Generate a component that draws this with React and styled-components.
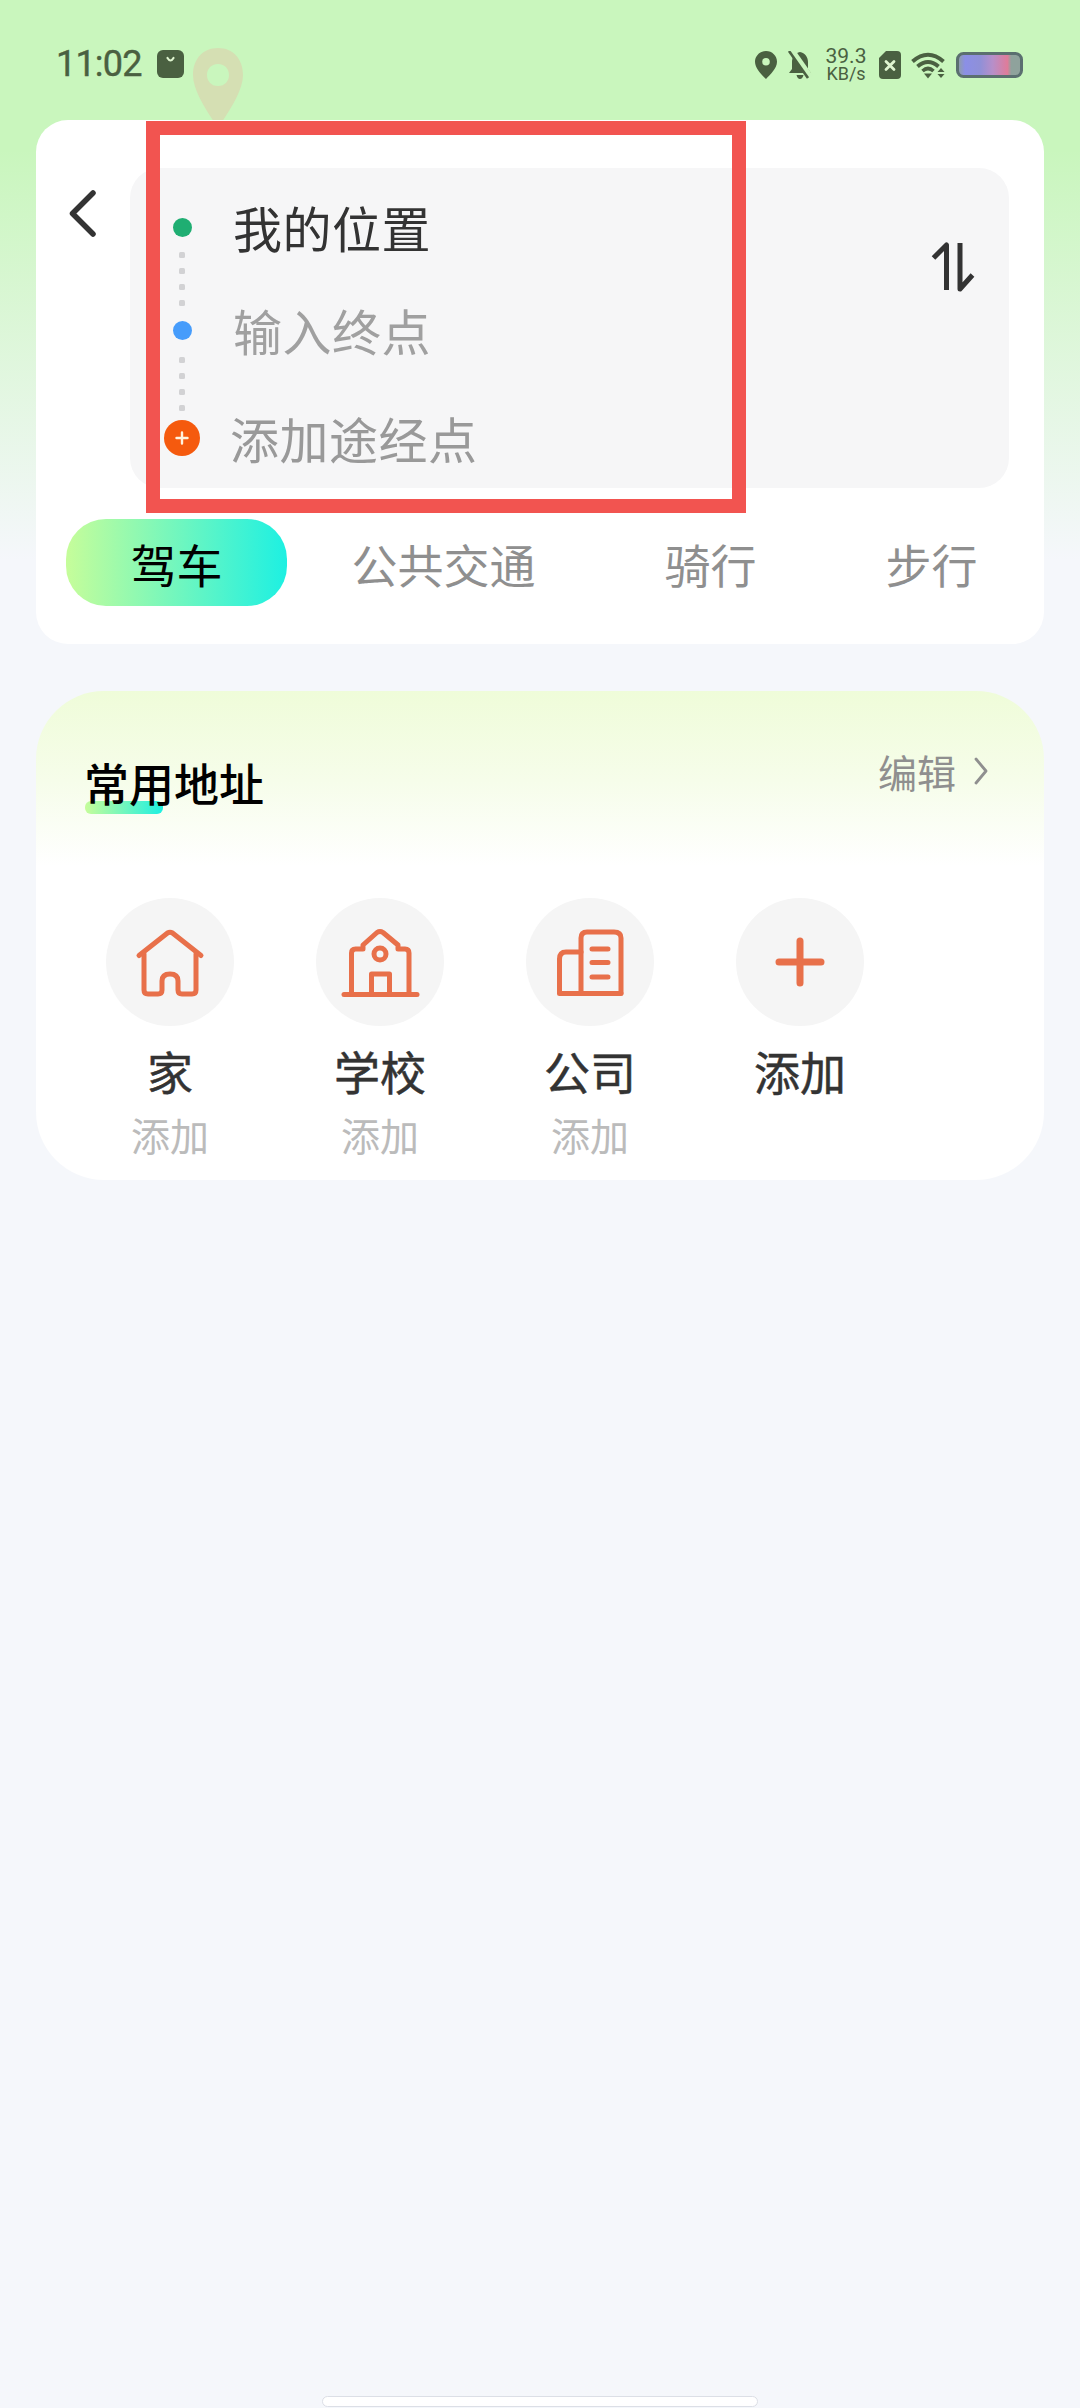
import React from 'react';
import styled, { createGlobalStyle } from 'styled-components';

const GlobalStyle = createGlobalStyle`
  html, body {
    margin: 0;
    padding: 0;
    background: #f5f7fb;
  }
  * {
    box-sizing: border-box;
  }
`;

const TABS = ['驾车', '公共交通', '骑行', '步行'];

const PLACES = [
  { name: '家', sub: '添加', icon: 'home' },
  { name: '学校', sub: '添加', icon: 'school' },
  { name: '公司', sub: '添加', icon: 'office' },
  { name: '添加', icon: 'plus' },
];

function PlaceIcon({ type }) {
  if (type === 'home') {
    return (
      <PlaceSvg viewBox="0 0 80 80">
        <path d="M9 33.5 L37.5 11 Q40 9.5 42.5 11 L71 33.5" />
        <path d="M14 32 V68 Q14 72 18 72 H28 Q32 72 32 68 V59 Q32 52 40 52 Q48 52 48 59 V68 Q48 72 52 72 H62 Q66 72 66 68 V32" />
      </PlaceSvg>
    );
  }
  if (type === 'school') {
    return (
      <PlaceSvg viewBox="0 0 80 80">
        <path d="M4 72.5 H77" />
        <path d="M11.5 72 V31 Q11.5 27 15.5 27 H23 V23 L37 10.5 Q40 8.5 43 10.5 L58 23 V27 H65 Q69 27 69 31 V72" />
        <circle cx="40" cy="32" r="6" />
        <path d="M31.5 72 V52 H49.5 V72" />
      </PlaceSvg>
    );
  }
  if (type === 'office') {
    return (
      <PlaceSvg viewBox="0 0 80 80">
        <path d="M31 71 V16 Q31 10 37 10 H64 Q71 10 71 16 V71" />
        <path d="M31 30 H16 Q9.5 30 9.5 37 V71.5 H71" />
        <path d="M42 27 H58 M42 40.5 H58 M42 55 H58" />
      </PlaceSvg>
    );
  }
  return (
    <PlaceSvg viewBox="0 0 80 80" $weight={7}>
      <path d="M19 40 H61 M40 19 V61" />
    </PlaceSvg>
  );
}

function StatusIcons() {
  return (
    <StatusRight>
      <svg width="22" height="28" viewBox="0 0 22 28">
        <path
          fill="#4a6041"
          fillRule="evenodd"
          d="M11 0 C4.8 0 0 4.8 0 10.8 C0 17.5 7 24 11 28 C15 24 22 17.5 22 10.8 C22 4.8 17.2 0 11 0 Z M11 7 A3.8 3.8 0 1 1 11 14.6 A3.8 3.8 0 1 1 11 7 Z"
        />
      </svg>
      <svg width="26" height="28" viewBox="0 0 26 28">
        <path fill="#4a6041" d="M13 1 C8 2 5 6 5 11 V18 L2 22 H24 L21 18 V11 C21 6 18 2 13 1 Z M9.5 24 H16.5 Q15.5 28 13 28 Q10.5 28 9.5 24 Z" />
        <path d="M5 -1 L24 26" stroke="#c9f5bd" strokeWidth="5" />
        <path d="M2 0 L21 27" stroke="#4a6041" strokeWidth="2.6" />
      </svg>
      <SpeedBox>
        <SpeedValue>39.3</SpeedValue>
        <SpeedUnit>KB/s</SpeedUnit>
      </SpeedBox>
      <svg width="22" height="28" viewBox="0 0 22 28">
        <path fill="#4a6041" d="M7 0 H18 Q22 0 22 4 V24 Q22 28 18 28 H4 Q0 28 0 24 V7 Z" />
        <path d="M7 10.5 L15 18.5 M15 10.5 L7 18.5" stroke="#dff5d0" strokeWidth="2.8" strokeLinecap="round" />
      </svg>
      <svg width="35" height="27" viewBox="0 0 35 27" fill="none" stroke="#4a6041">
        <path d="M1.5 9.5 Q17 -4 32.5 9.5" strokeWidth="4" />
        <path d="M6.5 14.5 Q17 5.5 27.5 14.5" strokeWidth="4" />
        <path d="M11.5 19 Q17 14 22.5 19" strokeWidth="3.6" />
        <path d="M13 21.5 H21 L17 26.5 Z" fill="#4a6041" stroke="none" />
        <path d="M30 16 L33.5 20 H26.5 Z M26.5 22 H33.5 L30 26 Z" fill="#4a6041" stroke="none" />
      </svg>
      <svg width="67" height="26" viewBox="0 0 67 26">
        <defs>
          <linearGradient id="batteryFill" x1="0" x2="1" y1="0" y2="0">
            <stop offset="0" stopColor="#8f9f9f" />
            <stop offset="0.12" stopColor="#8b8fe6" />
            <stop offset="0.35" stopColor="#8f90d8" />
            <stop offset="0.55" stopColor="#b78fc9" />
            <stop offset="0.78" stopColor="#df7c9a" />
            <stop offset="0.84" stopColor="#8fa29c" />
            <stop offset="1" stopColor="#8fa29c" />
          </linearGradient>
        </defs>
        <rect x="1.5" y="1.5" width="64" height="23" rx="6" fill="url(#batteryFill)" stroke="#5b6f70" strokeWidth="3" />
      </svg>
    </StatusRight>
  );
}

export default function App() {
  return (
    <Page>
      <GlobalStyle />

      <StatusBar>
        <StatusLeft>
          <Time>11:02</Time>
          <svg width="27" height="28" viewBox="0 0 27 28">
            <rect width="27" height="28" rx="6" fill="#4a6041" />
            <path d="M10.5 8 Q13.5 13 16.5 8" fill="none" stroke="#dff5d0" strokeWidth="2.2" strokeLinecap="round" />
          </svg>
        </StatusLeft>
        <StatusIcons />
        <WatermarkPin width="50" height="80" viewBox="0 0 50 80">
          <path
            fill="#d5dfb3"
            fillRule="evenodd"
            d="M25 0 C10 0 0 11 0 27 C0 44 16 66 25 80 C34 66 50 44 50 27 C50 11 40 0 25 0 Z M25 16 C32 16 36 21 36 27 C36 33 32 38 25 38 C18 38 14 33 14 27 C14 21 18 16 25 16 Z"
          />
        </WatermarkPin>
      </StatusBar>

      <RouteCard>
        <RouteTop>
          <BackButton width="27" height="47" viewBox="0 0 27 47">
            <path d="M24 3 L3.5 23.5 L24 44" />
          </BackButton>
          <RouteBox>
            <RouteList>
              <RouteRow>
                <MarkerSlot><Dot $color="#1fae72" /></MarkerSlot>
                <RouteLabel $active>我的位置</RouteLabel>
              </RouteRow>
              <Connector $height={55}>
                <i /><i /><i /><i />
              </Connector>
              <RouteRow>
                <MarkerSlot><Dot $color="#469cfb" /></MarkerSlot>
                <RouteLabel>输入终点</RouteLabel>
              </RouteRow>
              <Connector $height={60}>
                <i /><i /><i /><i />
              </Connector>
              <RouteRow>
                <MarkerSlot>
                  <AddMarker>
                    <svg width="16" height="16" viewBox="0 0 16 16">
                      <path d="M2.5 8 H13.5 M8 2.5 V13.5" stroke="#fff3e0" strokeWidth="2.4" strokeLinecap="round" />
                    </svg>
                  </AddMarker>
                </MarkerSlot>
                <WaypointLabel>添加途经点</WaypointLabel>
              </RouteRow>
            </RouteList>
            <SwapIcon width="44" height="50" viewBox="0 0 44 50">
              <path d="M2.5 16 L15.5 3 V48" />
              <path d="M29 1 V47 L41.5 33" />
            </SwapIcon>
          </RouteBox>
        </RouteTop>

        <TabRow>
          {TABS.map((tab, index) => (
            <Tab key={tab} $active={index === 0}>{tab}</Tab>
          ))}
        </TabRow>
      </RouteCard>

      <PlacesCard>
        <PlacesHeader>
          <PlacesTitle>
            <TitleMark />
            <TitleText>常用地址</TitleText>
          </PlacesTitle>
          <EditLink>
            编辑
            <svg width="14" height="30" viewBox="0 0 14 30">
              <path d="M2 3 L12 15 L2 27" fill="none" stroke="#8f8f8f" strokeWidth="2.8" strokeLinecap="round" strokeLinejoin="round" />
            </svg>
          </EditLink>
        </PlacesHeader>

        <PlacesRow>
          {PLACES.map((place) => (
            <Place key={place.icon}>
              <PlaceCircle><PlaceIcon type={place.icon} /></PlaceCircle>
              <PlaceName>{place.name}</PlaceName>
              {place.sub && <PlaceSub>{place.sub}</PlaceSub>}
            </Place>
          ))}
        </PlacesRow>
      </PlacesCard>

      <HomeIndicator />
      <RedFrame />
    </Page>
  );
}

const Page = styled.div`
  position: relative;
  width: 1080px;
  height: 2408px;
  display: flex;
  flex-direction: column;
  overflow: hidden;
  background: linear-gradient(180deg, #c9f6bd 0, #c9f6bd 150px, #f5f7fb 560px);
  font-family: "Noto Sans CJK SC", "Noto Sans", sans-serif;
`;

const StatusBar = styled.div`
  position: relative;
  height: 120px;
  flex: none;
  display: flex;
  justify-content: space-between;
  align-items: flex-start;
  padding: 47px 57px 0 56px;
  overflow: hidden;
`;

const StatusLeft = styled.div`
  display: flex;
  align-items: center;
  gap: 15px;
  padding-top: 3px;
`;

const Time = styled.span`
  font-family: Roboto, sans-serif;
  font-size: 36px;
  line-height: 28px;
  font-weight: 400;
  letter-spacing: -0.8px;
  color: #4a6041;
  -webkit-text-stroke: 0.4px #4a6041;
`;

const StatusRight = styled.div`
  display: flex;
  align-items: center;
  gap: 10px;
  height: 36px;
`;

const SpeedBox = styled.div`
  width: 46px;
  display: flex;
  flex-direction: column;
  align-items: center;
  font-family: Roboto, sans-serif;
  color: #4a6041;
`;

const SpeedValue = styled.span`
  font-size: 21px;
  line-height: 18px;
`;

const SpeedUnit = styled.span`
  font-size: 18px;
  line-height: 18px;
`;

const WatermarkPin = styled.svg`
  position: absolute;
  left: 193px;
  top: 48px;
`;

const RouteCard = styled.section`
  flex: none;
  height: 524px;
  margin: 0 36px;
  padding: 48px 35px 0 33px;
  background: #fff;
  border-radius: 32px;
`;

const RouteTop = styled.div`
  display: flex;
  align-items: flex-start;
  gap: 34px;
`;

const BackButton = styled.svg`
  flex: none;
  margin-top: 22px;
  fill: none;
  stroke: #333;
  stroke-width: 5.5;
  stroke-linecap: round;
  stroke-linejoin: round;
`;

const RouteBox = styled.div`
  flex: 1;
  height: 320px;
  display: flex;
  justify-content: space-between;
  align-items: flex-start;
  padding: 35px 34px 0 34px;
  background: #f6f6f7;
  border-radius: 30px;
`;

const RouteList = styled.div`
  display: flex;
  flex-direction: column;
`;

const RouteRow = styled.div`
  display: flex;
  align-items: center;
  height: 48px;
`;

const MarkerSlot = styled.div`
  width: 36px;
  flex: none;
  display: flex;
  justify-content: center;
`;

const Dot = styled.span`
  width: 19px;
  height: 19px;
  border-radius: 50%;
  background: ${(p) => p.$color};
`;

const AddMarker = styled.span`
  width: 36px;
  height: 36px;
  border-radius: 50%;
  background: #f55a0e;
  display: flex;
  align-items: center;
  justify-content: center;
`;

const Connector = styled.div`
  width: 36px;
  height: ${(p) => p.$height}px;
  display: flex;
  flex-direction: column;
  align-items: center;
  justify-content: center;
  gap: 10px;

  i {
    width: 6px;
    height: 6px;
    border-radius: 1.5px;
    background: #d2d2d4;
  }
`;

const RouteLabel = styled.span`
  margin-left: 33px;
  font-size: 49px;
  line-height: 48px;
  letter-spacing: 0.5px;
  color: ${(p) => (p.$active ? '#333' : '#a0a0a0')};
`;

const WaypointLabel = styled(RouteLabel)`
  margin-left: 30px;
  color: #999;
`;

const SwapIcon = styled.svg`
  flex: none;
  margin-top: 39px;
  fill: none;
  stroke: #333;
  stroke-width: 5;
  stroke-linejoin: round;
`;

const TabRow = styled.div`
  display: flex;
  margin: 31px 0 0 -3px;
`;

const Tab = styled.div`
  height: 87px;
  padding: 0 64.5px;
  display: flex;
  align-items: center;
  font-size: 46px;
  white-space: nowrap;
  color: ${(p) => (p.$active ? '#000' : '#8f8f8f')};
  background: ${(p) => (p.$active ? 'linear-gradient(90deg, #c6fd9a 0%, #1df0e2 100%)' : 'none')};
  border-radius: ${(p) => (p.$active ? '40px' : '0')};
`;

const PlacesCard = styled.section`
  flex: none;
  height: 489px;
  margin: 47px 36px 0;
  background: linear-gradient(180deg, #effcd9 0, #f6fdea 90px, #ffffff 175px);
  border-radius: 68px;
`;

const PlacesHeader = styled.div`
  display: flex;
  justify-content: space-between;
  align-items: flex-start;
  padding: 60px 56px 0 48px;
`;

const PlacesTitle = styled.h2`
  position: relative;
  margin: 9px 0 0;
  font-size: 45px;
  line-height: 46px;
  font-weight: 500;
  color: #000;
`;

const TitleText = styled.span`
  position: relative;
`;

const TitleMark = styled.span`
  position: absolute;
  left: 1px;
  bottom: -8px;
  width: 78px;
  height: 13px;
  border-radius: 6px;
  background: linear-gradient(90deg, #c6fd9a 0%, #1df0e2 100%);
`;

const EditLink = styled.div`
  display: flex;
  align-items: center;
  gap: 18px;
  font-size: 39px;
  line-height: 40px;
  color: #8f8f8f;
`;

const PlacesRow = styled.div`
  display: flex;
  padding: 92px 0 0 29px;
`;

const Place = styled.div`
  width: 210px;
  display: flex;
  flex-direction: column;
  align-items: center;
`;

const PlaceCircle = styled.div`
  width: 128px;
  height: 128px;
  border-radius: 50%;
  background: #f5f5f5;
  display: flex;
  align-items: center;
  justify-content: center;
`;

const PlaceSvg = styled.svg`
  width: 80px;
  height: 80px;
  fill: none;
  stroke: #e8704a;
  stroke-width: ${(p) => p.$weight || 5};
  stroke-linecap: round;
  stroke-linejoin: round;
`;

const PlaceName = styled.div`
  margin-top: 19px;
  font-size: 46px;
  line-height: 50px;
  color: #333;
  -webkit-text-stroke: 0.5px #333;
`;

const PlaceSub = styled.div`
  margin-top: 17px;
  font-size: 39px;
  line-height: 44px;
  color: #bbb;
`;

const HomeIndicator = styled.div`
  flex: none;
  width: 436px;
  height: 11px;
  margin: auto auto 1px;
  background: #fff;
  border: 1.5px solid #dcdfe6;
  border-radius: 6px;
`;

const RedFrame = styled.div`
  position: absolute;
  left: 146px;
  top: 121px;
  width: 600px;
  height: 392px;
  border: 14px solid #f25450;
`;
